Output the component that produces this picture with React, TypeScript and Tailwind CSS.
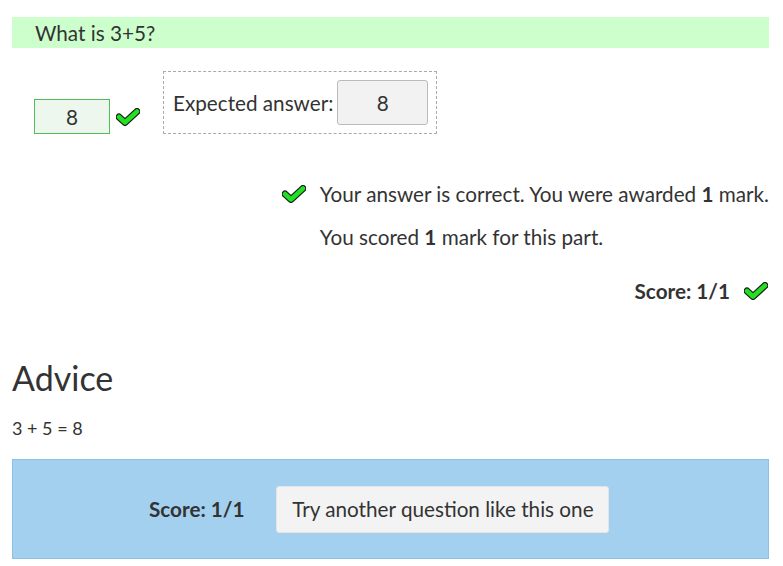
import React from 'react';

const font = { fontFamily: 'Lato, "Open Sans", sans-serif' };

const Tick: React.FC<{ className?: string }> = ({ className }) => (
  <svg viewBox="0 0 24 18" width="24" height="18" className={className}>
    <polyline points="3,9 9,14.5 21,3.5" fill="none" stroke="#1a1a1a" strokeWidth="7" strokeLinecap="round" strokeLinejoin="round" />
    <polyline points="3,9 9,14.5 21,3.5" fill="none" stroke="#22e022" strokeWidth="4.5" strokeLinecap="round" strokeLinejoin="round" />
  </svg>
);

export default function App() {
  return (
    <div className="w-[783px] h-[566px] bg-white text-[#333] overflow-hidden text-[20.7px] leading-[24px]" style={font}>
      <div className="pl-3 pr-[14px] pt-[17px]">
        <div className="h-[31px] bg-[#ccffcc] pl-[23px] flex items-center">What is 3+5?</div>

        <div className="flex items-start mt-[23px]">
          <div className="flex items-center mt-[28px] ml-[22px]">
            <div className="w-[76px] h-[35px] border border-[#55bb55] bg-[#eef7ee] flex items-center justify-center">8</div>
            <Tick className="ml-[6px]" />
          </div>
          <div className="ml-[23px] w-[274px] h-[63px] border border-dashed border-[#aaa] flex items-center pl-[9px]">
            <span>Expected answer:</span>
            <div className="ml-[4px] w-[91px] h-[45px] bg-[#f2f2f2] border border-[#bbb] rounded-[3px] flex items-center justify-center">8</div>
          </div>
        </div>

        <div className="flex justify-end mt-[48px]">
          <div className="flex flex-col">
            <div className="flex items-center h-[24px]">
              <Tick className="ml-[-38px] mr-[14px]" />
              <span>Your answer is correct. You were awarded <b>1</b> mark.</span>
            </div>
            <div className="mt-[19px] h-[24px]">You scored <b>1</b> mark for this part.</div>
          </div>
        </div>

        <div className="flex justify-end items-center mt-[30px] h-[24px]">
          <b>Score: 1/1</b>
          <Tick className="ml-[14px] mr-[1px]" />
        </div>

        <h2 className="text-[34px] font-normal mt-[53px] leading-[44px]">Advice</h2>
        <p className="mt-[16px] text-[18px] leading-[24px]">3 + 5 = 8</p>

        <div className="mt-[19px] h-[100px] bg-[#a3d0ee] border border-[#8cc0e4] flex items-center pl-[136px]">
          <b>Score: 1/1</b>
          <button className="ml-[32px] w-[333px] h-[47px] bg-[#f3f3f3] border border-[#e4e4e4] rounded-[3px]">Try another question like this one</button>
        </div>
      </div>
    </div>
  );
}
